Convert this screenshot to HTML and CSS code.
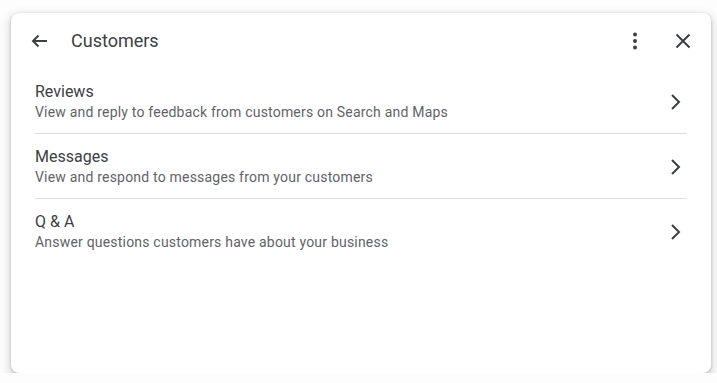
FILE: index.html
```html
<!doctype html>
<html>
<head>
	<meta http-equiv="content-type" content="text/html;charset=utf-8"/>
	<title>Customers</title>
	<link rel="stylesheet" href="styles.css">
</head>
<body>
	<div class="dialog">
		<div class="dialog-head">
			<svg class="icon" width="24" height="24" viewBox="0 0 24 24"><path d="M20 12H6M11.5 6.5L6 12l5.5 5.5" fill="none" stroke="#3c4043" stroke-width="2"/></svg>
			<h1 class="dialog-title">Customers</h1>
			<svg class="icon" width="24" height="24" viewBox="0 0 24 24"><circle cx="12" cy="5.5" r="2" fill="#3c4043"/><circle cx="12" cy="12" r="2" fill="#3c4043"/><circle cx="12" cy="18.5" r="2" fill="#3c4043"/></svg>
			<svg class="icon" width="24" height="24" viewBox="0 0 24 24"><path d="M5.5 5.5l13 13M18.5 5.5l-13 13" fill="none" stroke="#3c4043" stroke-width="2"/></svg>
		</div>
		<ul class="menu">
			<li class="menu-item">
				<div class="menu-text">
					<div class="menu-name">Reviews</div>
					<div class="menu-desc">View and reply to feedback from customers on Search and Maps</div>
				</div>
				<svg class="chev" width="24" height="24" viewBox="0 0 24 24"><path d="M9 5l7 7-7 7" fill="none" stroke="#3c4043" stroke-width="2"/></svg>
			</li>
			<li class="menu-item">
				<div class="menu-text">
					<div class="menu-name">Messages</div>
					<div class="menu-desc">View and respond to messages from your customers</div>
				</div>
				<svg class="chev" width="24" height="24" viewBox="0 0 24 24"><path d="M9 5l7 7-7 7" fill="none" stroke="#3c4043" stroke-width="2"/></svg>
			</li>
			<li class="menu-item">
				<div class="menu-text">
					<div class="menu-name">Q &amp; A</div>
					<div class="menu-desc">Answer questions customers have about your business</div>
				</div>
				<svg class="chev" width="24" height="24" viewBox="0 0 24 24"><path d="M9 5l7 7-7 7" fill="none" stroke="#3c4043" stroke-width="2"/></svg>
			</li>
		</ul>
	</div>
</body>
</html>
```

FILE: styles.css
```css
body {
    margin: 0;
    background: #fdfdfd;
    font-family: Roboto, "Liberation Sans", Arial, sans-serif;
    color: #3c4043;
}

/* dialog */
.dialog {
    margin: 13px 0 0 11px;
    width: 700px;
    height: 360px;
    background: #fff;
    border-radius: 8px;
    box-shadow: 0 1px 3px rgba(60, 64, 67, 0.3), 0 4px 8px 3px rgba(60, 64, 67, 0.15);
}
.dialog-head {
    display: flex;
    align-items: center;
    height: 56px;
    padding: 0 16px;
    gap: 24px;
}
.dialog-title {
    flex: 1;
    margin: 0 0 0 -4px;
    font-size: 18px;
    line-height: 24px;
    font-weight: 400;
    color: #3c4043;
}
.icon {
    display: block;
    flex: none;
}

/* menu */
.menu {
    list-style: none;
    margin: 0 24px;
    padding: 0;
}
.menu-item {
    display: flex;
    align-items: center;
    padding: 13px 0 11px;
    border-bottom: 1px solid #dadce0;
}
.menu-item:last-child {
    border-bottom: none;
}
.menu-text {
    flex: 1;
}
.menu-name {
    font-size: 16px;
    line-height: 20px;
    color: #3c4043;
}
.menu-desc {
    font-size: 14px;
    line-height: 20px;
    letter-spacing: 0.2px;
    color: #5f6368;
}
.chev {
    display: block;
    flex: none;
}
```
